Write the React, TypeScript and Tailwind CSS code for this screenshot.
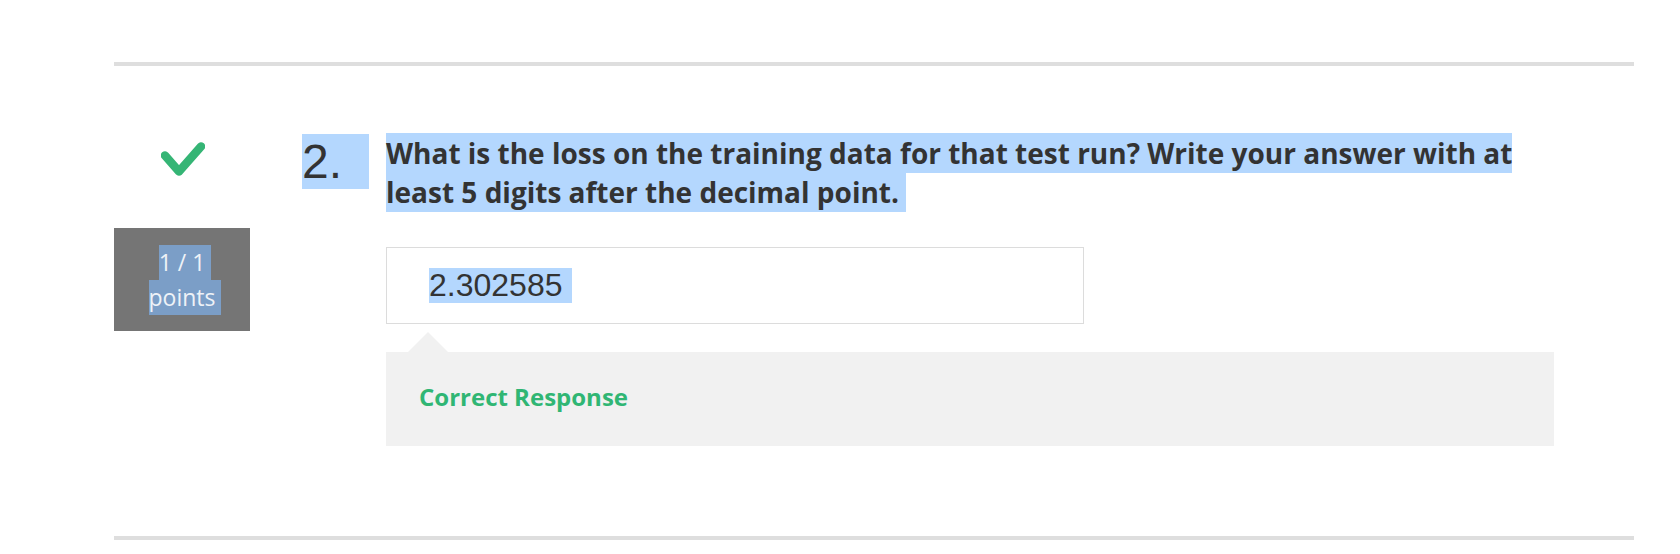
const sans = "font-['Open_Sans',_'Noto_Sans',_sans-serif]"
const helv = "font-['Liberation_Sans',_Arial,_sans-serif]"

function CheckMark() {
  return (
    <svg width="44" height="34" viewBox="0 0 44 34" className="block">
      <path
        d="M4 13.5 L18 29.5 L40 4.5"
        fill="none"
        stroke="#35b575"
        strokeWidth="8.5"
        strokeLinecap="round"
        strokeLinejoin="round"
      />
    </svg>
  )
}

export default function App() {
  return (
    <div className="min-h-screen w-full bg-white">
      <div className="ml-[114px] w-[1520px] pt-[62px]">
        {/* divider */}
        <div className="h-1 bg-[#dedede]" />

        {/* question row */}
        <div className="flex pt-[68px]">
          {/* status column */}
          <div className="flex w-[136px] shrink-0 flex-col items-center">
            <div className="mt-2 ml-[2px]">
              <CheckMark />
            </div>
            <div
              className={`mt-[52px] flex h-[103px] w-[136px] flex-col items-center justify-center bg-[#757575] pl-[6px] text-[23px] leading-[35px] text-[#eef2f7] ${sans}`}
            >
              <span className="bg-[#7b9ec7] pr-[6px]">1 / 1</span>
              <span className="bg-[#7b9ec7] pr-[6px]">points</span>
            </div>
          </div>

          {/* number */}
          <div className="ml-[52px] w-[84px] shrink-0">
            <span className={`inline-block w-[67px] bg-[#b4d7fe] text-[48px] leading-[55px] text-[#333] ${helv}`}>
              2.
            </span>
          </div>

          {/* content */}
          <div className="w-[1168px] shrink-0">
            <p className={`text-[28px] leading-[39px] font-bold text-[#333] ${sans}`}>
              <span className="bg-[#b4d7fe] py-[1px] box-decoration-clone">
                What is the loss on the training data for that test run? Write your answer with at least 5 digits
                after the decimal point.&nbsp;
              </span>
            </p>

            <div className="mt-[35px] flex h-[77px] w-[698px] items-center border border-[#dcdcdc] pl-[42px]">
              <span className={`bg-[#b4d7fe] pr-[10px] text-[32px] leading-[35px] text-[#333] ${helv}`}>2.302585</span>
            </div>

            {/* feedback */}
            <div className="mt-2">
              <div className="ml-[22px] h-0 w-0 border-r-[20px] border-b-[20px] border-l-[20px] border-r-transparent border-b-[#f1f1f1] border-l-transparent" />
              <div className={`flex h-[94px] items-center bg-[#f1f1f1] px-[33px] pb-1 ${sans}`}>
                <span className="text-[24px] font-bold text-[#30b674]">Correct Response</span>
              </div>
            </div>
          </div>
        </div>

        {/* divider */}
        <div className="mt-[90px] h-1 bg-[#dedede]" />
      </div>
    </div>
  )
}
